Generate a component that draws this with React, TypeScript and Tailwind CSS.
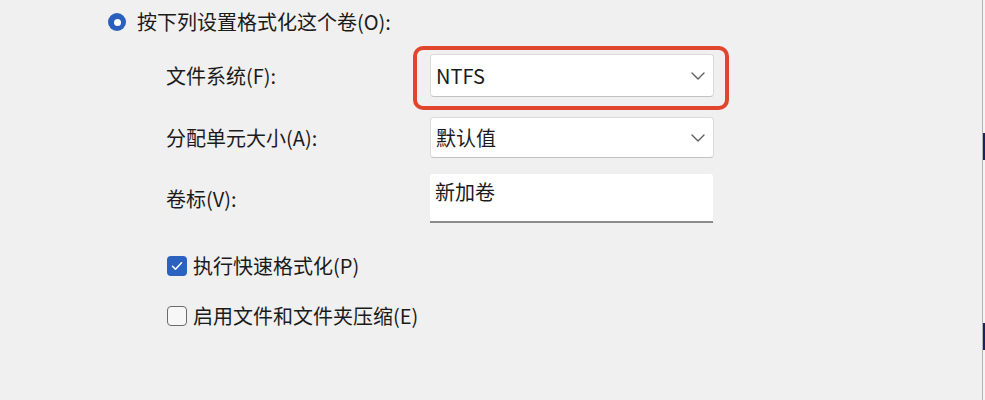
import type { FC, ReactNode } from 'react';

const font = { fontFamily: '"Noto Sans CJK SC", "Noto Sans", sans-serif' };

const Chevron: FC = () => (
  <svg width="14" height="8" viewBox="0 0 14 8" fill="none">
    <path d="M1 1l6 6 6-6" stroke="#5f5f5f" strokeWidth="1.4" strokeLinecap="round" strokeLinejoin="round" />
  </svg>
);

const Select: FC<{ value: string; className?: string; children?: ReactNode }> = ({ value, className, children }) => (
  <div
    className={`relative flex w-[284px] items-center justify-between rounded-[4px] border border-[#dadada] border-b-[#c2c2c2] bg-white pl-[5px] pr-[8px] ${className ?? ''}`}
  >
    <span className="leading-none">{value}</span>
    <Chevron />
    {children}
  </div>
);

const Row: FC<{ label: string; className?: string; children: ReactNode }> = ({ label, className, children }) => (
  <div className={`flex items-center ${className ?? ''}`}>
    <div className="w-[264px] leading-none">{label}</div>
    {children}
  </div>
);

const CheckRow: FC<{ checked?: boolean; label: string; className?: string }> = ({ checked, label, className }) => (
  <div className={`ml-[1px] flex h-[20px] items-center gap-[6px] ${className ?? ''}`}>
    {checked ? (
      <span className="flex h-[20px] w-[20px] items-center justify-center rounded-[4px] bg-[#2b62c0]">
        <svg width="12" height="10" viewBox="0 0 12 10" fill="none">
          <path d="M1.5 5.2l3 3 6-6.5" stroke="white" strokeWidth="1.5" strokeLinecap="round" strokeLinejoin="round" />
        </svg>
      </span>
    ) : (
      <span className="h-[20px] w-[20px] rounded-[4px] border-[1.5px] border-[#6b6b6b] bg-[#f7f7f7]" />
    )}
    <span className="leading-none">{label}</span>
  </div>
);

const App: FC = () => {
  return (
    <div className="flex h-[400px] w-[985px] overflow-hidden bg-[#f0f0f0] text-[20px] text-[#1b1b1b]" style={font}>
      <div className="flex flex-1 flex-col pl-[108px] pt-[13px]">
        <div className="flex h-[18px] items-center gap-[11px]">
          <span className="flex h-[18px] w-[18px] items-center justify-center rounded-full bg-[#2a60bd]">
            <span className="h-[7px] w-[7px] rounded-full bg-white" />
          </span>
          <span className="leading-none">按下列设置格式化这个卷(O):</span>
        </div>

        <div className="ml-[58px] mt-[23px] flex flex-col">
          <Row label="文件系统(F):" className="h-[43px]">
            <Select value="NTFS" className="h-[43px]">
              <div className="pointer-events-none absolute -left-[18px] -top-[9px] h-[64px] w-[316px] rounded-[10px] border-[4px] border-[#e2452e]" />
            </Select>
          </Row>
          <Row label="分配单元大小(A):" className="mt-[20px] h-[41px]">
            <Select value="默认值" className="h-[41px]" />
          </Row>
          <Row label="卷标(V):" className="mt-[16px] h-[49px]">
            <div className="h-[49px] w-[283px] rounded-t-[3px] border-b-2 border-[#8a8a8a] bg-white pl-[5px] pt-[8px] leading-none">
              新加卷
            </div>
          </Row>
          <CheckRow checked label="执行快速格式化(P)" className="mt-[33px]" />
          <CheckRow label="启用文件和文件夹压缩(E)" className="mt-[30px]" />
        </div>
      </div>

      <div className="flex w-[3px] flex-col border-l border-[#b4b4b4] bg-[#f4f4f4]">
        <div className="h-[133px]" />
        <div className="h-[27px] bg-[#1c2160]" />
        <div className="h-[163px]" />
        <div className="h-[27px] bg-[#1c2160]" />
      </div>
    </div>
  );
};

export default App;
